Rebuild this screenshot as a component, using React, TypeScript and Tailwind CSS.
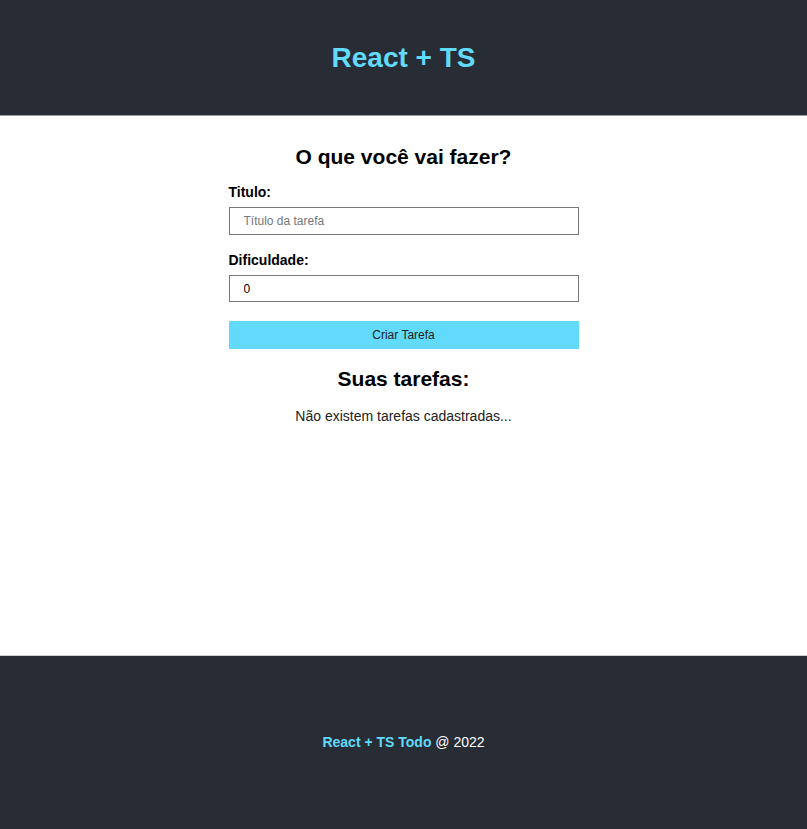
import { useState, FormEvent } from "react";

type Task = {
  id: number;
  title: string;
  difficulty: number;
};

export default function App() {
  const [tasks, setTasks] = useState<Task[]>([]);
  const [title, setTitle] = useState("");
  const [difficulty, setDifficulty] = useState("0");

  function handleSubmit(e: FormEvent<HTMLFormElement>) {
    e.preventDefault();
    setTasks([...tasks, { id: Date.now(), title, difficulty: Number(difficulty) }]);
    setTitle("");
    setDifficulty("0");
  }

  return (
    <div className="min-h-screen flex flex-col bg-white font-['Liberation_Sans',Arial,sans-serif]">
      <header className="h-[116px] flex items-center justify-center bg-[#282c34] border-b border-[#9a9a9a]">
        <h1 className="text-[28px] font-bold text-[#61dafb]">React + TS</h1>
      </header>

      <main className="min-h-[539px] flex flex-col items-center">
        <div className="w-[350px] flex flex-col">
          <h2 className="mt-[29px] text-center text-[21px] leading-[24px] font-bold text-black">O que você vai fazer?</h2>

          <form onSubmit={handleSubmit} className="flex flex-col mt-[15px]">
            <label className="text-[14px] leading-[16px] font-bold text-black">Titulo:</label>
            <input
              type="text"
              placeholder="Título da tarefa"
              value={title}
              onChange={(e) => setTitle(e.target.value)}
              className="mt-[7px] h-[28px] px-[14px] border border-[#777] text-[12px] text-black placeholder:text-[#777] outline-none"
            />

            <label className="mt-[17px] text-[14px] leading-[16px] font-bold text-black">Dificuldade:</label>
            <input
              type="text"
              value={difficulty}
              onChange={(e) => setDifficulty(e.target.value)}
              className="mt-[7px] h-[27px] px-[14px] border border-[#777] text-[12px] text-black outline-none"
            />

            <button type="submit" className="mt-[19px] h-[28px] bg-[#61dafb] text-[12px] text-[#222]">
              Criar Tarefa
            </button>
          </form>

          <h2 className="mt-[18px] text-center text-[21px] leading-[24px] font-bold text-black">Suas tarefas:</h2>

          {tasks.length === 0 ? (
            <p className="mt-[17px] text-center text-[14px] leading-[16px] text-[#222]">Não existem tarefas cadastradas...</p>
          ) : (
            tasks.map((t) => (
              <p key={t.id} className="mt-2 text-center text-[14px]">{t.title} - {t.difficulty}</p>
            ))
          )}
        </div>
      </main>

      <footer className="h-[174px] flex items-center justify-center bg-[#282c34] border-t border-[#cfcfcf]">
        <p className="text-[14px] text-white">
          <span className="font-bold text-[#61dafb]">React + TS Todo</span> @ 2022
        </p>
      </footer>
    </div>
  );
}
